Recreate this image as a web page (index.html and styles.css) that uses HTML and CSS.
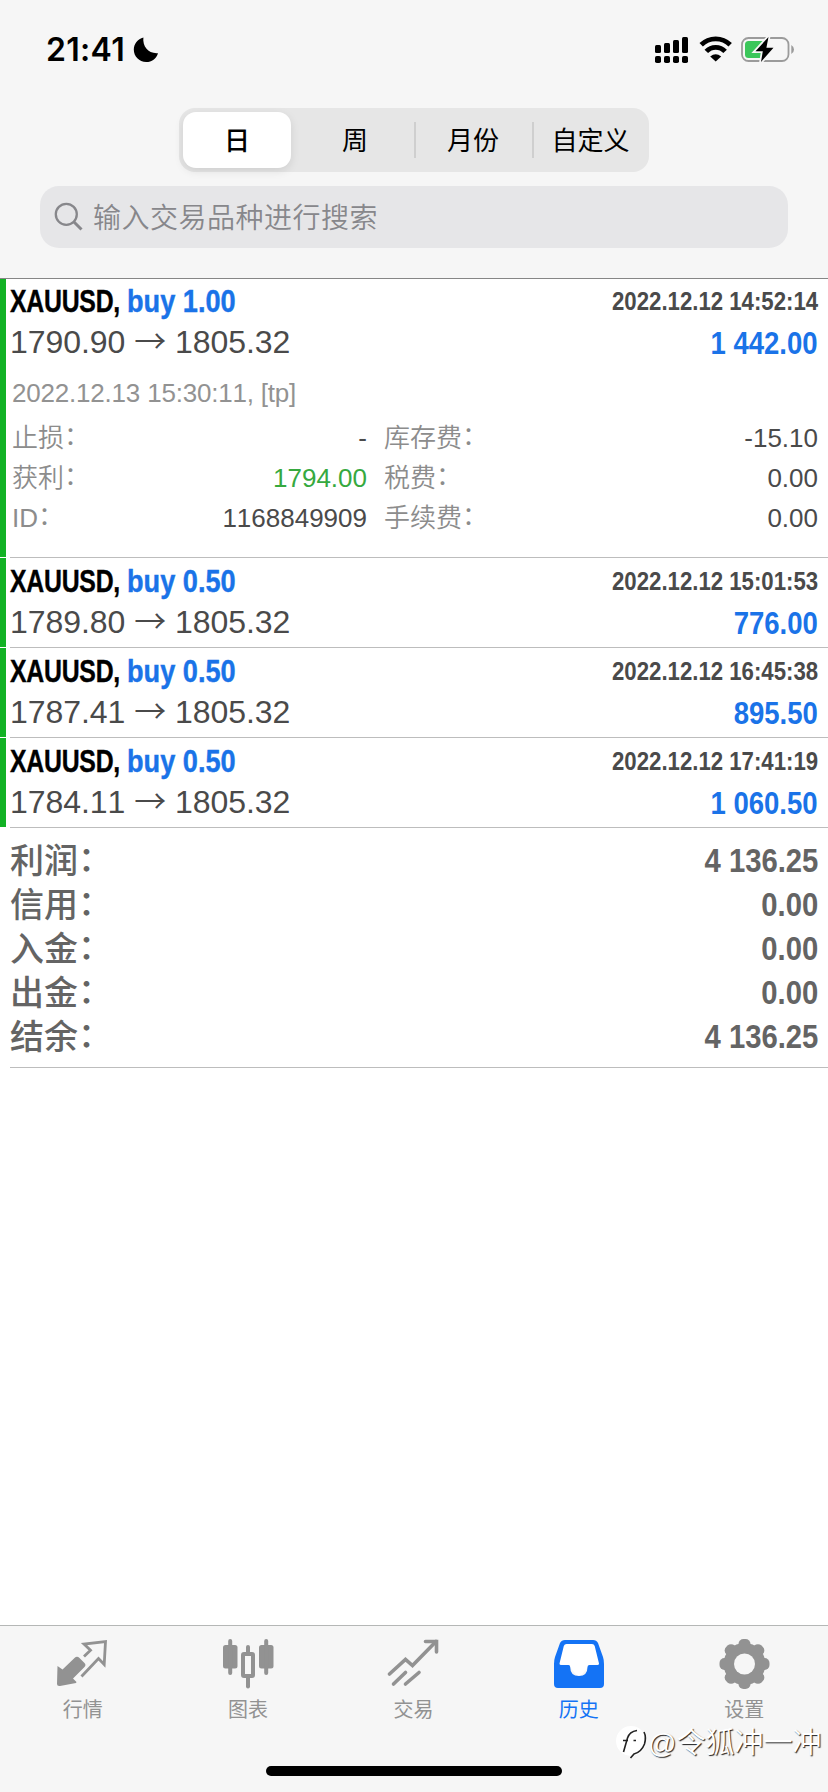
FILE: index.html
```html
<!DOCTYPE html>
<html lang="zh-CN">
<head>
<meta charset="utf-8">
<title>历史</title>
<link rel="stylesheet" href="styles.css">
</head>
<body>
<div class="screen">
  <header class="header">
    <div class="status">
      <span class="clock">21:41</span>
      <svg class="moon" width="26" height="26" viewBox="0 0 26 26"><path d="M10.4 0.6C9.3 9.5 15.5 17 25 16.2C23.3 21.6 18.8 25 13.2 25C6.2 25 0.8 19.6 0.8 12.6C0.8 7 4.6 2.2 10.4 0.6Z"/></svg>
      <svg class="indicators" width="142" height="28" viewBox="0 0 142 28">
        <g>
          <rect x="1" y="9" width="6" height="8" rx="1.5"/><rect x="10" y="7" width="6" height="10" rx="1.5"/><rect x="19" y="4" width="6" height="13" rx="1.5"/><rect x="28" y="1" width="6" height="16" rx="1.5"/>
          <rect x="1" y="20" width="6" height="7" rx="1.8"/><rect x="10" y="20" width="6" height="7" rx="1.8"/><rect x="19" y="20" width="6" height="7" rx="1.8"/><rect x="28" y="20" width="6" height="7" rx="1.8"/>
        </g>
        <g fill="none" stroke="#000" stroke-width="4.8"><path d="M47.200 8.800A20.500 20.500 0 0 1 76.200 8.800"/><path d="M52.300 15.400A12.800 12.800 0 0 1 71.100 15.400"/></g>
        <path d="M56.200 20.600Q61.700 16 67.200 20.600L61.700 25.400Z"/>
        <rect x="88" y="2" width="46.500" height="23" rx="6.500" fill="none" stroke="#9b9b9b" stroke-width="1.800"/>
        <rect x="91" y="5" width="20" height="17" rx="3.500" fill="#3bc65a"/>
        <path d="M137.300 9V18Q140 16.500 140 13.500Q140 10.500 137.300 9Z" fill="#9b9b9b"/>
        <path d="M114.500 1L101.500 15.200H108.800L107 26L119.500 11.800H112.400Z" stroke="#f6f6f6" stroke-width="3.600"/>
        <path d="M114.500 1L101.500 15.200H108.800L107 26L119.500 11.800H112.400Z"/>
      </svg>
    </div>
    <div class="segments">
      <span class="segment active">日</span><span class="segment">周</span><span class="segment divided">月份</span><span class="segment divided">自定义</span>
    </div>
    <div class="search">
      <svg width="30" height="30" viewBox="0 0 30 30" fill="none" stroke="#87878b"><circle cx="12.300" cy="12.300" r="10.500" stroke-width="2.300"/><path d="M20 20L27.500 27.500" stroke-width="3"/></svg>
      <span>输入交易品种进行搜索</span>
    </div>
  </header>

  <main class="content">
    <article class="deal expanded">
      <div class="line"><h2 class="symbol">XAUUSD, <b>buy 1.00</b></h2><time class="time">2022.12.12 14:52:14</time></div>
      <div class="line prices"><span class="price">1790.90 <i>→</i> 1805.32</span><span class="profit">1 442.00</span></div>
      <p class="closed">2022.12.13 15:30:11, [tp]</p>
      <dl class="details">
        <div class="cell"><dt>止损<span class="colon">：</span></dt><dd>-</dd></div><div class="cell"><dt>库存费<span class="colon">：</span></dt><dd>-15.10</dd></div>
        <div class="cell"><dt>获利<span class="colon">：</span></dt><dd class="green">1794.00</dd></div><div class="cell"><dt>税费<span class="colon">：</span></dt><dd>0.00</dd></div>
        <div class="cell"><dt>ID<span class="colon">：</span></dt><dd>1168849909</dd></div><div class="cell"><dt>手续费<span class="colon">：</span></dt><dd>0.00</dd></div>
      </dl>
    </article>
    <article class="deal">
      <div class="line"><h2 class="symbol">XAUUSD, <b>buy 0.50</b></h2><time class="time">2022.12.12 15:01:53</time></div>
      <div class="line prices"><span class="price">1789.80 <i>→</i> 1805.32</span><span class="profit">776.00</span></div>
    </article>
    <article class="deal">
      <div class="line"><h2 class="symbol">XAUUSD, <b>buy 0.50</b></h2><time class="time">2022.12.12 16:45:38</time></div>
      <div class="line prices"><span class="price">1787.41 <i>→</i> 1805.32</span><span class="profit">895.50</span></div>
    </article>
    <article class="deal">
      <div class="line"><h2 class="symbol">XAUUSD, <b>buy 0.50</b></h2><time class="time">2022.12.12 17:41:19</time></div>
      <div class="line prices"><span class="price">1784.11 <i>→</i> 1805.32</span><span class="profit">1 060.50</span></div>
    </article>
    <dl class="summary">
      <div class="total"><dt>利润<span class="colon">：</span></dt><dd>4 136.25</dd></div>
      <div class="total"><dt>信用<span class="colon">：</span></dt><dd>0.00</dd></div>
      <div class="total"><dt>入金<span class="colon">：</span></dt><dd>0.00</dd></div>
      <div class="total"><dt>出金<span class="colon">：</span></dt><dd>0.00</dd></div>
      <div class="total"><dt>结余<span class="colon">：</span></dt><dd>4 136.25</dd></div>
    </dl>
  </main>

  <footer class="footer">
    <nav class="tabs">
      <a class="tab">
        <svg width="52" height="52" viewBox="1 0 52 52"><path d="M1.500 28L6.500 31.500L18.500 20Q21 17.600 23.500 20L28.500 25Q30.400 27 28.500 29L17 40.500L20.500 44L20 45L4 48Q1 48.400 1 46Z" fill="#929292"/><path d="M28 18.500L34.500 12.200L28 6L49.500 3.500L48.200 26.500L42.500 20.500L25.500 38.500" fill="none" stroke="#929292" stroke-width="2.800"/></svg>
        <span>行情</span>
      </a>
      <a class="tab">
        <svg width="52" height="52" viewBox="0 0 52 52" fill="#929292"><rect x="1" y="7" width="14.500" height="23.500" rx="2.500"/><rect x="6.200" y="1" width="4" height="36" rx="2"/><rect x="37" y="7" width="14.500" height="23.500" rx="2.500"/><rect x="42.200" y="1" width="4" height="36" rx="2"/><rect x="24" y="7" width="4" height="10" rx="2"/><rect x="24" y="38" width="4" height="12.500" rx="2"/><rect x="21" y="16" width="10" height="22" rx="1" fill="none" stroke="#929292" stroke-width="4"/></svg>
        <span>图表</span>
      </a>
      <a class="tab">
        <svg width="52" height="52" viewBox="0 0 52 52" fill="none" stroke="#929292" stroke-width="3.600"><path d="M2.500 36L18.500 21.500L25.500 27.500L49 3.500" stroke-linecap="round"/><path d="M38.500 3.500H49.500V14" stroke-linecap="round"/><path d="M6.500 46L18.500 34.500M18.500 46L32 34.500" stroke-linecap="round"/></svg>
        <span>交易</span>
      </a>
      <a class="tab current">
        <svg width="52" height="52" viewBox="0 0 52 52"><path fill="#fff" d="M11 4H41L47 26L36 28L26 40L16 28L5 26Z"/><path fill="#1473f5" fill-rule="evenodd" d="M12 2H40Q43.500 2 45 5L50 19Q51 22 51 26V46Q51 50 47 50H5Q1 50 1 46V26Q1 22 2 19L7 5Q8.500 2 12 2ZM13.500 6Q11.500 6 10.800 8L6.500 25.500Q6.500 27 8 27H15.500Q17.200 27 17.200 29Q17.200 38 26 38Q34.500 38 34.500 29Q34.500 27 36.500 27H44.500Q46 27 46 25.500L41.700 8Q41 6 39 6Z"/></svg>
        <span>历史</span>
      </a>
      <a class="tab">
        <svg width="52" height="52" viewBox="-26.500 -26 52 52"><g fill="#929292"><circle r="21"/><g id="tooth"><rect x="-6" y="-25" width="12" height="50" rx="5"/><rect x="-25" y="-6" width="50" height="12" rx="5"/></g><use href="#tooth" transform="rotate(45)"/></g><circle r="10.500" fill="#f6f6f6"/></svg>
        <span>设置</span>
      </a>
    </nav>
    <div class="home"></div>
    <div class="watermark">
      <svg width="34" height="36" viewBox="0 0 34 36"><circle cx="15" cy="17" r="15" fill="#fff"/><path d="M7.500 28L11.500 14Q13.500 7.500 21 6.500M7 16.500H12M17.500 16.500H20M28 8Q30.500 13 28.500 20Q25.500 28 18 30L14.500 34" fill="none" stroke="#222" stroke-width="1.600"/></svg>
      <span class="handle"><span class="at">@</span>令狐冲一冲</span>
    </div>
  </footer>
</div>
</body>
</html>
```
FILE: styles.css
```css
* { box-sizing: border-box; }
body { margin: 0; background: #fff; font-family: "Liberation Sans", "Noto Sans CJK SC", sans-serif; font-kerning: none; }
h2, p, dl, dd { margin: 0; }

.screen { width: 828px; height: 1792px; display: flex; flex-direction: column; overflow: hidden; background: #fff; }

.header { height: 279px; flex: none; background: #f6f6f6; border-bottom: 1px solid #868686; display: flex; flex-direction: column; }
.status { height: 108px; display: flex; align-items: flex-start; padding: 36px 32px 0 46px; }
.clock { font: 600 32px/28px Inter, sans-serif; letter-spacing: .3px; }
.moon { margin: 1px 0 0 8px; }
.indicators { margin-left: auto; }

.segments { width: 470px; height: 64px; margin-left: 179px; padding: 4px; border-radius: 16px; background: #e6e6e6; display: grid; grid-template-columns: 113px 118px 118px 117px; font: 400 26px/54px "Noto Sans CJK SC", sans-serif; text-align: center; }
.segment { height: 56px; line-height: 54px; position: relative; }
.active { width: 108px; background: #fff; border-radius: 13px; font-weight: 500; box-shadow: 0 3px 10px rgba(0,0,0,.1); }
.divided::before { content: ""; position: absolute; left: 0; top: 10px; width: 2px; height: 36px; background: #cfcfcf; }

.search { width: 748px; height: 62px; margin: 14px 0 0 40px; padding-left: 14px; border-radius: 19px; background: #e6e6e8; color: #87878b; display: flex; align-items: center; gap: 9px; font: 350 28px/40px "Noto Sans CJK SC", sans-serif; letter-spacing: .5px; }
.search span { padding-bottom: 2px; }

.content { flex: 1; }
.deal { height: 90px; position: relative; padding: 10px 10px 0 10px; }
.deal::before { content: ""; position: absolute; left: 0; top: 0; bottom: 1px; width: 6px; background: #12b225; }
.deal::after { content: ""; position: absolute; left: 10px; right: 0; bottom: 0; height: 1px; background: #bdbdbd; }
.expanded { height: 279px; padding-top: 9px; }
.line { display: flex; justify-content: space-between; height: 26px; line-height: 26px; white-space: nowrap; }
.prices { margin-top: 16px; color: #4a4a4a; }
.symbol { font-size: 32px; font-weight: 700; line-height: 26px; letter-spacing: -.3px; -webkit-text-stroke: .4px; transform: scaleX(.775); transform-origin: left; }
.symbol b { display: inline-block; color: #1a73e8; letter-spacing: 0; transform: scaleX(1.095); transform-origin: left; }
.time { font-size: 25px; font-weight: 700; color: #4a4a4a; transform: scaleX(.888); transform-origin: right; }
.price { font-size: 32px; line-height: 24px; letter-spacing: -.05px; }
.price i { font: 350 32px/24px "Noto Sans CJK SC", sans-serif; line-height: 0; }
.profit { font-size: 32px; font-weight: 700; color: #1a73e8; transform: scaleX(.86); transform-origin: right; }
.closed { margin-top: 22px; padding-left: 2px; font-size: 26px; line-height: 30px; letter-spacing: -.2px; color: #929292; }
.details { display: grid; grid-template-columns: 355px 434px; column-gap: 17px; padding-left: 2px; margin-top: 10px; font-size: 26px; }
.cell { height: 40px; display: flex; justify-content: space-between; line-height: 40px; color: #4a4a4a; }
.cell dt { color: #8c8c8c; font-weight: 350; }
.cell .green { color: #36a93f; }
.colon { vertical-align: .06em; line-height: 0; }

.summary { height: 240px; margin-left: 10px; padding: 10px 10px 0 0; border-bottom: 1px solid #bdbdbd; color: #646464; font-size: 34px; }
.total { height: 44px; line-height: 44px; display: flex; justify-content: space-between; }
.total dt { font-weight: 500; padding-top: 1px; }
.total dd { font-weight: 700; transform: scaleX(.86); transform-origin: right; }

.footer { height: 167px; flex: none; position: relative; background: #f6f6f6; border-top: 1px solid #b5b7b6; }
.tabs { display: grid; grid-template-columns: repeat(5, 165.4px); padding-top: 12px; }
.tab { display: flex; flex-direction: column; align-items: center; color: #929292; font: 400 20px/22px "Noto Sans CJK SC", sans-serif; }
.tab span { margin-top: 8px; }
.current { color: #1473f5; }
.home { position: absolute; left: 266px; top: 140px; width: 296px; height: 10px; border-radius: 5px; background: #000; }
.watermark { position: absolute; left: 616px; top: 97px; display: flex; align-items: center; height: 38px; white-space: nowrap; }
.handle { margin-left: -2px; font: 350 29px/34px "Noto Sans CJK SC", sans-serif; color: #fff; text-shadow: 1px 1px 1px #222; }
.at { font: 28px/34px "Liberation Sans", sans-serif; }
```
